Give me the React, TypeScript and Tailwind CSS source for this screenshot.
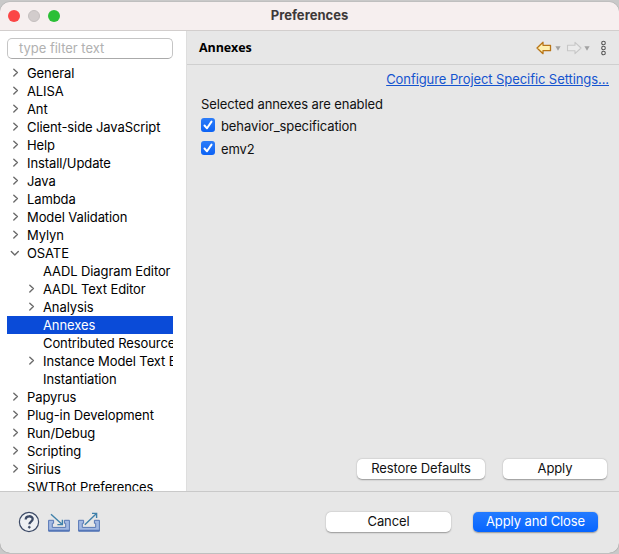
import type { ReactNode } from "react";

type Item = { label: string; child?: boolean; state?: "closed" | "open"; selected?: boolean };

const items: Item[] = [
  { label: "General", state: "closed" },
  { label: "ALISA", state: "closed" },
  { label: "Ant", state: "closed" },
  { label: "Client-side JavaScript", state: "closed" },
  { label: "Help", state: "closed" },
  { label: "Install/Update", state: "closed" },
  { label: "Java", state: "closed" },
  { label: "Lambda", state: "closed" },
  { label: "Model Validation", state: "closed" },
  { label: "Mylyn", state: "closed" },
  { label: "OSATE", state: "open" },
  { label: "AADL Diagram Editor", child: true },
  { label: "AADL Text Editor", child: true, state: "closed" },
  { label: "Analysis", child: true, state: "closed" },
  { label: "Annexes", child: true, selected: true },
  { label: "Contributed Resources", child: true },
  { label: "Instance Model Text Editor", child: true, state: "closed" },
  { label: "Instantiation", child: true },
  { label: "Papyrus", state: "closed" },
  { label: "Plug-in Development", state: "closed" },
  { label: "Run/Debug", state: "closed" },
  { label: "Scripting", state: "closed" },
  { label: "Sirius", state: "closed" },
  { label: "SWTBot Preferences" },
];

function Chevron({ state }: { state: "closed" | "open" }) {
  return (
    <svg width="10" height="10" viewBox="0 0 10 10" fill="none" stroke="#6b6b6b" strokeWidth="1.4" strokeLinecap="round" strokeLinejoin="round">
      <path d={state === "open" ? "M1.3 3.4 4.8 7 8.3 3.4" : "M3.8 1.2 7.4 4.6 3.8 8"} />
    </svg>
  );
}

function TreeRow({ item }: { item: Item }) {
  return (
    <li className={`flex h-[18px] items-center whitespace-nowrap ${item.child ? "pl-4" : ""} ${item.selected ? "bg-[#0a4bd8] text-white" : ""}`}>
      <span className="flex w-5 shrink-0 pl-[3px]">{item.state && <Chevron state={item.state} />}</span>
      <span className="leading-[18px]">{item.label}</span>
    </li>
  );
}

function Check({ label }: { label: string }) {
  return (
    <label className="flex h-[23px] items-center gap-[6px]">
      <span className="-mt-[3px] flex size-[14px] items-center justify-center rounded-[3px] bg-gradient-to-b from-[#2b7cf8] to-[#0b62f5]">
        <svg width="14" height="14" viewBox="0 0 14 14" fill="none" stroke="white" strokeWidth="2" strokeLinecap="round" strokeLinejoin="round">
          <path d="M3.5 7.5 6 10.3 10.5 3.6" />
        </svg>
      </span>
      {label}
    </label>
  );
}

function Button({ className, children }: { className: string; children: ReactNode }) {
  return (
    <button className={`flex h-5 items-center justify-center rounded-[5px] shadow-[0_0.5px_1.5px_rgba(0,0,0,0.35)] ${className}`}>
      {children}
    </button>
  );
}

function Caret() {
  return (
    <svg width="6" height="5" viewBox="0 0 6 5" fill="#a2a2a2">
      <path d="M.4.3h5.2L3 4.8z" />
    </svg>
  );
}

function Tray({ out }: { out?: boolean }) {
  return (
    <svg width="24" height="22" viewBox="0 0 24 22" fill="none">
      <path d="M1.6 9.3h5v3H5.3v4.1h13.4v-4.1h-1.3v-3h5v10.8H1.6z" fill="#a3b9e2" stroke="#5878b5" strokeWidth="1" />
      <path d="M1.6 19.6h20.8" stroke="#5476b8" strokeWidth="1.6" />
      {out ? (
        <g stroke="#3f80aa" strokeWidth="1.4"><path d="M7.8 13.7 19 3" /><path d="M15 2.4h4.6V7" /></g>
      ) : (
        <g stroke="#3f80aa" strokeWidth="1.4"><path d="M4 3.3 15 13.2" /><path d="M15.4 8.8v4.8h-5" /></g>
      )}
    </svg>
  );
}

export default function App() {
  return (
    <div className="h-[554px] w-[619px] overflow-hidden bg-[#c9c9c9] pt-[2px] font-['Inter','Liberation_Sans',sans-serif] text-[13px] tracking-[-0.1px] text-[#111]">
      <div className="flex h-[551px] flex-col overflow-hidden rounded-[10px] bg-[#e7e7e7] shadow-[0_0_1px_#666]">
        <header className="grid h-[29px] shrink-0 grid-cols-[1fr_auto_1fr] items-center border-b border-[#d2cecd] bg-[#f6efef]">
          <div className="flex gap-2 pl-2">
            <i className="size-3 rounded-full bg-[#fb4646]" />
            <i className="size-3 rounded-full border border-[#c4bfbf] bg-[#d2cccc]" />
            <i className="size-3 rounded-full bg-[#2bbf36]" />
          </div>
          <h1 className="text-[13px] font-bold tracking-[0.02px] text-[#3d3939]">Preferences</h1>
        </header>

        <div className="flex h-[461px] shrink-0 border-b border-[#c9c9c9]">
          <aside className="flex w-[186px] shrink-0 flex-col bg-white pl-[7px] pr-[13px] text-black">
            <div className="mt-[7px] flex h-[21px] w-[166px] shrink-0 items-center rounded-[5px] border border-[#c5c5c5] border-b-[#aaa] pl-[11px] pt-px tracking-[-0.02px] text-[#b1b1b1]">
              type filter text
            </div>
            <ul className="mt-[5px] min-h-0 flex-1 overflow-hidden">
              {items.map((item) => <TreeRow key={item.label} item={item} />)}
            </ul>
          </aside>

          <main className="flex min-w-0 flex-1 flex-col border-l border-[#dedede]">
            <div className="flex h-[34px] shrink-0 items-center border-b border-[#cfcfcf] pl-3 pr-3">
              <h2 className="flex-1 pt-px font-['Open_Sans','Noto_Sans',sans-serif] text-[12.5px] font-bold text-black">Annexes</h2>
              <svg width="16" height="14" viewBox="0 0 16 14" fill="#fff0ae" stroke="#b87518" strokeWidth="1.3" strokeLinejoin="round">
                <path d="M1 7 7 1.3v3h7.5v5.4H7v3z" />
              </svg>
              <span className="ml-[3px] pt-px"><Caret /></span>
              <svg className="ml-[5px]" width="16" height="14" viewBox="0 0 16 14" fill="#ebebeb" stroke="#c7c7c7" strokeWidth="1.1" strokeLinejoin="round">
                <path d="M15 7 9 1.3v3H1.5v5.4H9v3z" />
              </svg>
              <span className="ml-[2px] pt-px"><Caret /></span>
              <svg className="ml-[10px] mt-px" width="7" height="16" viewBox="0 0 7 16" fill="#eee" stroke="#555" strokeWidth="1.1">
                <circle cx="3.5" cy="3" r="1.8" /><circle cx="3.5" cy="8" r="1.8" /><circle cx="3.5" cy="13" r="1.8" />
              </svg>
            </div>
            <div className="flex h-[29px] items-center justify-end pr-[10px] pt-px">
              <a className="tracking-[-0.08px] text-[#1554cf] underline">Configure Project Specific Settings...</a>
            </div>
            <div className="flex flex-col pl-[14px]">
              <p className="mb-px h-5 leading-5">Selected annexes are enabled</p>
              <Check label="behavior_specification" />
              <Check label="emv2" />
            </div>
            <div className="mb-3 mr-3 mt-auto flex justify-end gap-[18px]">
              <Button className="w-[128px] bg-white">Restore Defaults</Button>
              <Button className="w-[104px] bg-white">Apply</Button>
            </div>
          </main>
        </div>

        <footer className="flex min-h-0 flex-1 items-center pb-px pl-[18px] pr-[21px]">
          <svg width="22" height="22" viewBox="0 0 22 22" fill="none" stroke="#3c4a66">
            <circle cx="11" cy="11" r="9.6" fill="#eef0f3" strokeWidth="1.2" />
            <path d="M7.7 8.4c0-4.2 7-4 7-.4 0 2.5-3.3 2.6-3.3 5.2" strokeWidth="2.3" />
            <circle cx="11.3" cy="16.2" r="1" fill="#3c4a66" strokeWidth=".7" />
          </svg>
          <div className="ml-[7px] flex gap-[6px]"><Tray /><Tray out /></div>
          <div className="ml-auto flex gap-[22px]">
            <Button className="w-[125px] bg-white">Cancel</Button>
            <Button className="w-[125px] bg-gradient-to-b from-[#237bff] to-[#0564ff] text-white">Apply and Close</Button>
          </div>
        </footer>
      </div>
    </div>
  );
}
